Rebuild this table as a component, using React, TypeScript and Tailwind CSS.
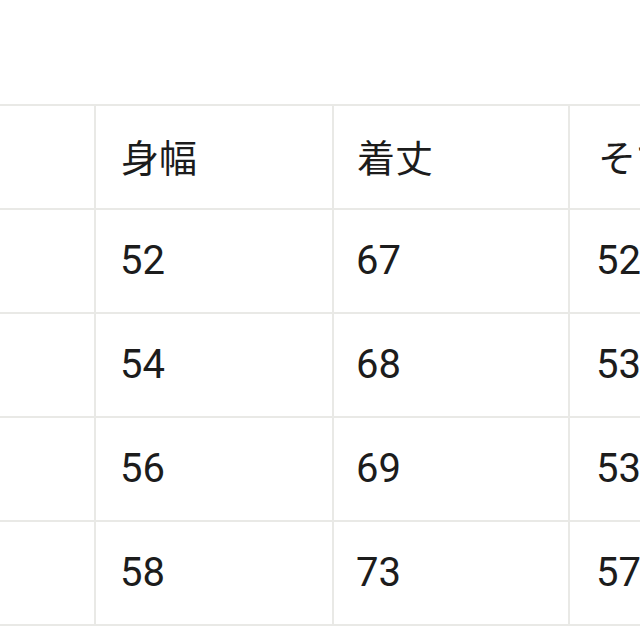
import React from "react";

const rows: string[][] = [
  ["身幅", "着丈", "そで丈"],
  ["52", "67", "52"],
  ["54", "68", "53"],
  ["56", "69", "53"],
  ["58", "73", "57"],
];

export default function App() {
  return (
    <div
      className="w-[640px] h-[640px] bg-white overflow-hidden pt-[104px]"
      style={{ fontFamily: 'Roboto, "Noto Sans CJK JP", sans-serif' }}
    >
      <div className="w-[820px] border-t-2 border-[#e9e9e6]">
        {rows.map((r, i) => (
          <div key={i} className="flex h-[104px] border-b-2 border-[#e9e9e6]">
            <div className="w-[96px] shrink-0 border-r-2 border-[#e9e9e6]" />
            <div
              className={`w-[238px] shrink-0 border-r-2 border-[#e9e9e6] flex items-center text-[#1c1c1c] ${
                i === 0 ? "text-[38px] pl-[25px] pt-[4px]" : "text-[40px] pl-[24px]"
              }`}
            >
              {r[0]}
            </div>
            <div
              className={`w-[236px] shrink-0 border-r-2 border-[#e9e9e6] flex items-center text-[#1c1c1c] ${
                i === 0 ? "text-[38px] pl-[23px] pt-[4px]" : "text-[40px] pl-[22px]"
              }`}
            >
              {r[1]}
            </div>
            <div
              className={`w-[240px] shrink-0 flex items-center text-[#1c1c1c] whitespace-nowrap ${
                i === 0 ? "text-[38px] pl-[28px] pt-[4px]" : "text-[40px] pl-[26px]"
              }`}
            >
              {r[2]}
            </div>
          </div>
        ))}
      </div>
    </div>
  );
}
